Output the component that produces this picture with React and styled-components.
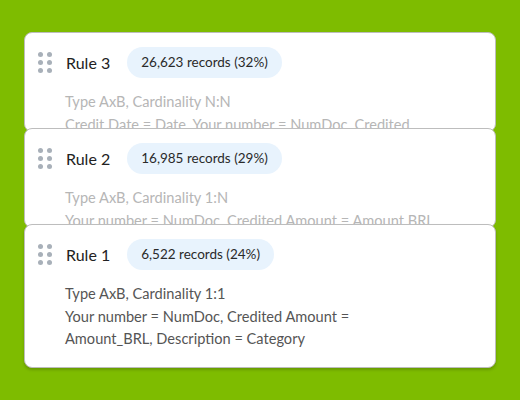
import React from 'react';
import styled, { createGlobalStyle } from 'styled-components';

const GlobalStyle = createGlobalStyle`
  html, body {
    margin: 0;
    padding: 0;
    background: #7ebc00;
  }
  body {
    font-family: Lato, "Open Sans", sans-serif;
  }
`;

const Page = styled.div`
  width: 520px;
  height: 400px;
  box-sizing: border-box;
  padding: 32px 24px 0 24px;
  background: #7ebc00;
`;

const Stack = styled.div`
  display: flex;
  flex-direction: column;
  width: 472px;
`;

const Card = styled.div`
  position: relative;
  box-sizing: border-box;
  background: #fff;
  border: 1.5px solid #bdbdbd;
  border-radius: 8px;
  padding: 13px 16px 16px 12px;
  overflow: hidden;
  height: ${p => (p.collapsed ? '100px' : 'auto')};
  margin-bottom: ${p => (p.collapsed ? '-4px' : '0')};
  box-shadow: ${p => (p.collapsed ? 'none' : '0 2px 3px rgba(0,0,0,0.18)')};
`;

const Header = styled.div`
  display: flex;
  align-items: center;
  height: 32px;
`;

const Grip = styled.div`
  display: grid;
  grid-template-columns: 5px 5px;
  grid-auto-rows: 5px;
  gap: 3px 4px;
  margin-left: 1px;
  margin-right: 14px;
  > span {
    width: 5px;
    height: 5px;
    border-radius: 50%;
    background: #a8b0b9;
  }
`;

const Title = styled.span`
  font-size: 16px;
  color: #222;
  margin-right: 17px;
`;

const Badge = styled.span`
  display: inline-flex;
  align-items: center;
  height: 31px;
  padding: 0 14px;
  border-radius: 16px;
  background: #e8f3fd;
  font-size: 13.5px;
  color: #2a2a2a;
`;

const Desc = styled.div`
  margin-top: 13px;
  padding-left: 28px;
  max-width: 370px;
  font-size: 14.6px;
  line-height: 22.5px;
  color: ${p => (p.faded ? '#b6b6b6' : '#555')};
`;

const rules = [
  {
    name: 'Rule 3',
    records: '26,623 records (32%)',
    text: 'Credit Date = Date, Your number = NumDoc, Credited Amount = Amount_BRL',
    type: 'Type AxB, Cardinality N:N',
  },
  {
    name: 'Rule 2',
    records: '16,985 records (29%)',
    type: 'Type AxB, Cardinality 1:N',
    text: 'Your number = NumDoc, Credited Amount = Amount BRL',
  },
  {
    name: 'Rule 1',
    records: '6,522 records (24%)',
    type: 'Type AxB, Cardinality 1:1',
    text: 'Your number = NumDoc, Credited Amount = Amount_BRL, Description = Category',
  },
];

export default function App() {
  return (
    <Page>
      <GlobalStyle />
      <Stack>
        {rules.map((r, idx) => {
          const collapsed = idx < rules.length - 1;
          return (
            <Card key={idx} collapsed={collapsed}>
              <Header>
                <Grip>
                  {[0, 1, 2, 3, 4, 5].map(i => <span key={i} />)}
                </Grip>
                <Title>{r.name}</Title>
                <Badge>{r.records}</Badge>
              </Header>
              <Desc faded={collapsed}>
                <div>{r.type}</div>
                <div>{r.text}</div>
              </Desc>
            </Card>
          );
        })}
      </Stack>
    </Page>
  );
}
